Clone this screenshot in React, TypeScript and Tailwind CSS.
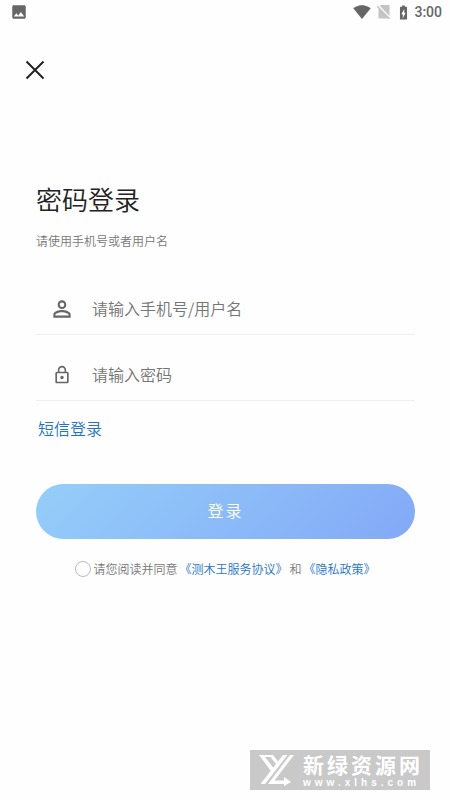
import { useState } from 'react';
import {
  MdBatteryChargingFull,
  MdImage,
  MdLockOutline,
  MdPersonOutline,
  MdSignalWifi4Bar,
} from 'react-icons/md';

function StatusBar() {
  return (
    <div className="flex h-6 items-center justify-between pl-2.5 pr-2 text-[#666666]">
      <MdImage size={18} />
      <div className="flex items-center">
        <MdSignalWifi4Bar size={18} />
        <svg width="14" height="14" viewBox="0 0 14 14" className="ml-1.5" aria-hidden="true">
          <path d="M4 0h8.500v13.500H1.500V2.500z" fill="#c4c4c4" />
          <path d="M0.500 0l13.500 14" stroke="#fefefe" strokeWidth="2" />
          <path d="M0 1l13 13" stroke="#c4c4c4" strokeWidth="1.300" />
        </svg>
        <MdBatteryChargingFull size={17} className="ml-1" />
        <span className="ml-0.5 font-['Roboto','Liberation_Sans',sans-serif] text-sm font-medium">3:00</span>
      </div>
    </div>
  );
}

function Watermark() {
  return (
    <div className="absolute bottom-2.5 right-5 flex h-10 w-[180px] gap-2 bg-[#c9c9c9] pl-[9px] text-white">
      <svg
        width="36"
        height="32"
        viewBox="0 0 36 32"
        fill="none"
        stroke="currentColor"
        className="self-center"
        aria-hidden="true"
      >
        <path d="M0 1h14l5 6.500-2 2.500-5.500-7H6l8.500 11-2.500 3z" fill="currentColor" stroke="none" />
        <path d="M24 1h4.500L6 30H1.500z" fill="currentColor" stroke="none" />
        <path d="M31 1h4L15.500 26.500H25V23l7 5-7 4v-2H9z" fill="currentColor" stroke="none" />
      </svg>
      <div className="flex flex-col pt-1.5 font-['Liberation_Sans','Noto_Sans_CJK_SC',sans-serif] font-bold">
        <span className="text-[21px] leading-5 tracking-[3px]">新绿资源网</span>
        <span className="mt-0.5 text-[10px] leading-[10px] tracking-[4px]">www.xlhs.com</span>
      </div>
    </div>
  );
}

export default function App() {
  const [account, setAccount] = useState('');
  const [password, setPassword] = useState('');
  const [agreed, setAgreed] = useState(false);

  return (
    <div className="relative min-h-screen bg-[#fefefe] font-['Noto_Sans_CJK_SC',sans-serif] font-[350]">
      <StatusBar />
      <header className="px-6 pt-[35px]">
        <button type="button" aria-label="关闭" className="block text-[#222222]">
          <svg width="22" height="22" viewBox="0 0 22 22" fill="none" stroke="currentColor" strokeWidth="2">
            <path d="M2.500 2.500l17 17M19.500 2.500l-17 17" />
          </svg>
        </button>
      </header>

      <main className="pl-9 pr-[35px] pt-[98px]">
        <h1 className="text-[26px] font-[350] leading-10 text-[#222222]">密码登录</h1>
        <p className="mt-3 text-xs leading-5 text-[#777777]">请使用手机号或者用户名</p>

        <form onSubmit={(e) => e.preventDefault()}>
          <div className="mt-[33px] flex h-[51px] items-center border-b border-[#eeeeee]">
            <label htmlFor="account" aria-label="手机号/用户名" className="flex w-[52px] justify-center">
              <MdPersonOutline size={26} className="text-[#666666]" />
            </label>
            <input
              id="account"
              type="text"
              value={account}
              onChange={(e) => setAccount(e.target.value)}
              placeholder="请输入手机号/用户名"
              className="ml-1 min-w-0 flex-1 pb-0.5 text-base text-[#333333] outline-none placeholder:text-[#757575]"
            />
          </div>
          <div className="mt-[15px] flex h-[51px] items-center border-b border-[#eeeeee]">
            <label htmlFor="password" aria-label="密码" className="flex w-[52px] justify-center">
              <MdLockOutline size={20} className="text-[#666666]" />
            </label>
            <input
              id="password"
              type="password"
              value={password}
              onChange={(e) => setPassword(e.target.value)}
              placeholder="请输入密码"
              className="ml-1 min-w-0 flex-1 pb-0.5 text-base text-[#333333] outline-none placeholder:text-[#757575]"
            />
          </div>

          <a href="#sms" className="ml-0.5 mt-[15px] block w-fit text-base leading-6 text-[#1f74c8]">
            短信登录
          </a>

          <button
            type="submit"
            className="mt-11 block h-[55px] w-full rounded-full bg-linear-[135deg] from-[#95cef9] to-[#83a9f7] pb-1 text-base tracking-[2px] text-white"
          >
            登录
          </button>

          <div className="mt-5 flex items-center justify-center text-xs leading-5 text-[#777777]">
            <input
              id="agree"
              type="checkbox"
              checked={agreed}
              onChange={(e) => setAgreed(e.target.checked)}
              className="mr-0.5 size-4 appearance-none rounded-full border border-[#bbbbbb] checked:bg-[#1f74c8]"
            />
            <label htmlFor="agree">请您阅读并同意</label>
            <a href="#service" className="ml-0.5 text-[#1f74c8]">《测木王服务协议》</a>
            <span className="mx-0.5">和</span>
            <a href="#privacy" className="text-[#1f74c8]">《隐私政策》</a>
          </div>
        </form>
      </main>

      <Watermark />
    </div>
  );
}
